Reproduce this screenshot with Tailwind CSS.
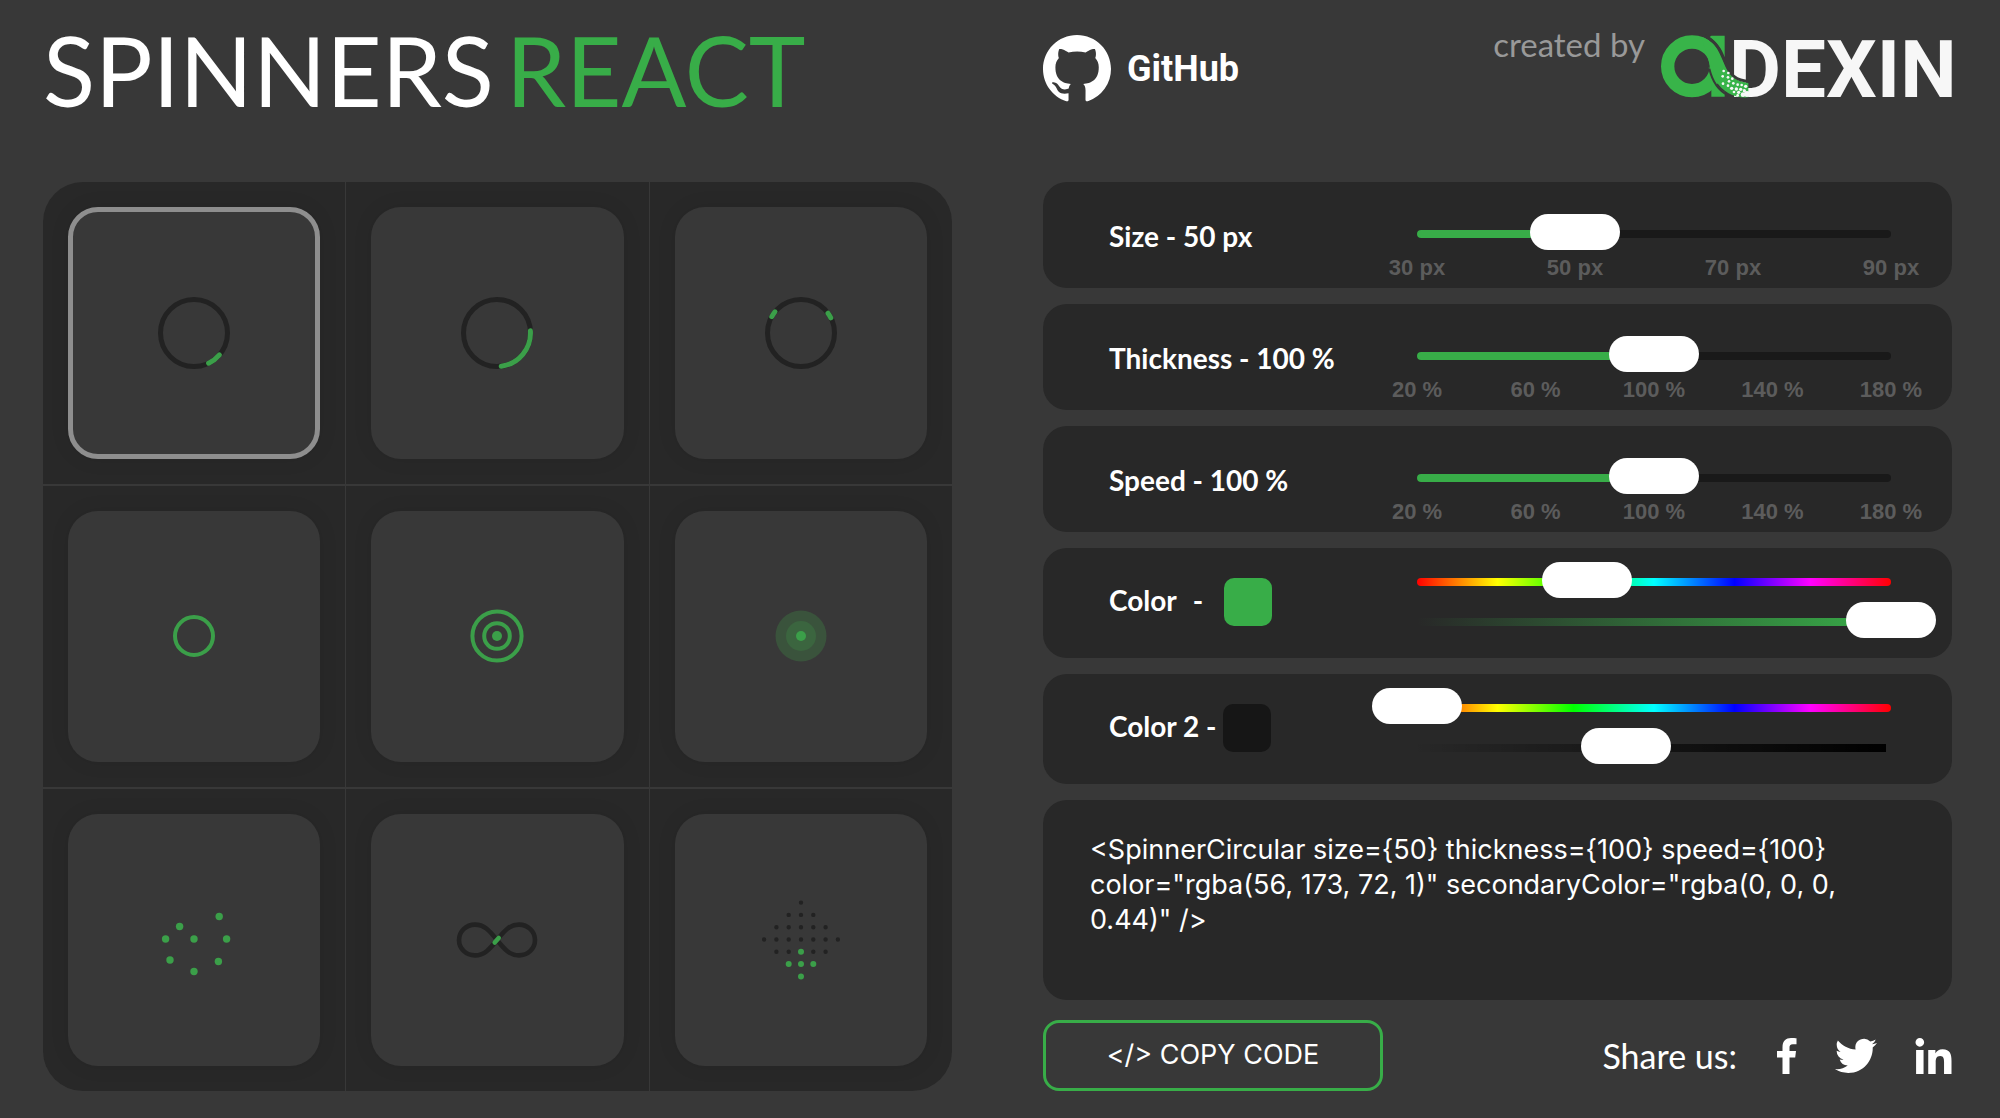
<!DOCTYPE html>
<html lang="en">
<head>
<meta charset="utf-8">
<meta name="viewport" content="width=device-width, initial-scale=1">
<title>Spinners React</title>
<script src="https://cdn.jsdelivr.net/npm/@tailwindcss/browser@4"></script>
</head>
<body class="min-h-screen bg-[#383838] pr-12 pl-[43px] pb-[27px] font-[Lato,sans-serif] text-white">
<header class="grid h-[182px] grid-cols-2 gap-[91px]">
  <h1 class="flex gap-3 pt-2.5 text-[96px] leading-[120px] whitespace-nowrap"><span>SPINNERS</span> <span class="text-[#38ad48]">REACT</span></h1>
  <div class="flex items-start justify-between">
    <a href="#github" class="mt-[35px] flex items-center gap-4">
      <svg class="size-[68px]" viewBox="0 0 16 16" fill="currentColor" aria-hidden="true"><path d="M8 0C3.58 0 0 3.58 0 8c0 3.54 2.29 6.53 5.47 7.59.4.07.55-.17.55-.38 0-.19-.01-.82-.01-1.49-2.01.37-2.53-.49-2.69-.94-.09-.23-.48-.94-.82-1.13-.28-.15-.68-.52-.01-.53.63-.01 1.08.58 1.23.82.72 1.21 1.87.87 2.33.66.07-.52.28-.87.51-1.07-1.78-.2-3.64-.89-3.64-3.95 0-.87.31-1.59.82-2.15-.08-.2-.36-1.02.08-2.12 0 0 .67-.21 2.2.82.64-.18 1.32-.27 2-.27s1.36.09 2 .27c1.53-1.04 2.2-.82 2.2-.82.44 1.1.16 1.92.08 2.12.51.56.82 1.27.82 2.15 0 3.07-1.87 3.75-3.65 3.95.29.25.54.73.54 1.48 0 1.07-.01 1.93-.01 2.2 0 .21.15.46.55.38A8.01 8.01 0 0 0 16 8c0-4.42-3.58-8-8-8z"/></svg>
      <span class="font-[Roboto,sans-serif] text-[36px] leading-10 font-bold">GitHub</span>
    </a>
    <a href="#adexin" class="flex items-start gap-4">
      <span class="mt-6 text-[33px] leading-10 text-[#999]">created by</span>
      <svg class="mt-[35px] h-16 w-[291px] overflow-visible" viewBox="0 0 291 64" role="img" aria-label="Adexin">
        <text x="68" y="62" fill="#f7f7f7" font-family="Roboto" font-weight="700" font-size="80">DEXIN</text>
        <g transform="translate(-20 -15) scale(.33333)">
          <circle cx="153" cy="139" r="73" fill="none" stroke="#38b449" stroke-width="40"/>
          <path d="M211 47H251V112C242 86 228 66 205 52Z" fill="#38b449"/>
          <path d="M203 140C214 180 230 204 251 216V230H211V200Z" fill="#38b449"/>
          <path d="M180 50C225 65 240 105 258 145C272 175 295 186 322 188V232C280 235 244 215 225 182C214 160 208 145 200 110Z" fill="#38b449"/>
          <path d="M193 48C234 68 243 110 259 143C274 174 294 184 345 186" fill="none" stroke="#383838" stroke-width="8"/>
          <path d="M205 146C214 184 232 212 262 226" fill="none" stroke="#383838" stroke-width="6"/>
          <g fill="#f7f7f7">
            <circle cx="248" cy="153" r="4"/><circle cx="262" cy="159" r="4"/><circle cx="245" cy="169" r="4"/><circle cx="261" cy="172" r="4"/><circle cx="274" cy="176" r="4"/><circle cx="264" cy="184" r="4"/><circle cx="246" cy="191" r="4"/><circle cx="277" cy="190" r="4"/><circle cx="261" cy="197" r="4"/><circle cx="290" cy="194" r="4"/><circle cx="272" cy="205" r="5"/><circle cx="286" cy="207" r="5"/><circle cx="302" cy="195" r="4"/><circle cx="299" cy="208" r="5"/><circle cx="314" cy="199" r="5"/><circle cx="310" cy="212" r="5"/><circle cx="293" cy="217" r="5"/><circle cx="279" cy="216" r="4"/><circle cx="306" cy="224" r="7"/><circle cx="318" cy="222" r="9"/><circle cx="290" cy="226" r="4"/>
          </g>
        </g>
      </svg>
    </a>
  </div>
</header>

<main class="grid grid-cols-2 items-stretch gap-[91px]">
  <section aria-label="Spinners" class="grid aspect-square grid-cols-3 grid-rows-3 gap-x-px gap-y-0.5 overflow-hidden rounded-[40px]">
    <div class="grid bg-[#282828] p-[25px]">
      <button aria-label="Circular" aria-pressed="true" class="grid place-items-center rounded-[30px] border-[5px] border-[#8e8e8e] bg-[#383838] shadow-[0_0_20px_#00000014]">
        <svg class="size-20 overflow-visible" viewBox="-40 -40 80 80" fill="none" stroke-width="5" stroke-linecap="round"><circle r="33.5" stroke="#222"/><path d="M25.4 21.8A33.5 33.5 0 0 1 14.6 30.2" stroke="#3b9f49"/></svg>
      </button>
    </div>
    <div class="grid bg-[#282828] p-[25px]">
      <button aria-label="Circular fixed" class="grid place-items-center rounded-[30px] bg-[#383838] shadow-[0_0_20px_#00000014]">
        <svg class="size-20 overflow-visible" viewBox="-40 -40 80 80" fill="none" stroke-width="5" stroke-linecap="round"><circle r="33.5" stroke="#222"/><path d="M33.4 -2.2A33.5 33.5 0 0 1 4.2 33.2" stroke="#3b9f49"/></svg>
      </button>
    </div>
    <div class="grid bg-[#282828] p-[25px]">
      <button aria-label="Circular split" class="grid place-items-center rounded-[30px] bg-[#383838] shadow-[0_0_20px_#00000014]">
        <svg class="size-20 overflow-visible" viewBox="-40 -40 80 80" fill="none" stroke-width="5" stroke-linecap="round"><circle r="33.5" stroke="#222"/><path d="M-29.2 -16.4A33.5 33.5 0 0 1 -26 -21.2M27 -19.8A33.5 33.5 0 0 1 29.8 -15.2" stroke="#3b9f49"/></svg>
      </button>
    </div>
    <div class="grid bg-[#282828] p-[25px]">
      <button aria-label="Round" class="grid place-items-center rounded-[30px] bg-[#383838] shadow-[0_0_20px_#00000014]">
        <svg class="size-20 overflow-visible" viewBox="-40 -40 80 80" fill="none" stroke="#3b9f49" stroke-width="4"><circle r="19"/></svg>
      </button>
    </div>
    <div class="grid bg-[#282828] p-[25px]">
      <button aria-label="Round outlined" class="grid place-items-center rounded-[30px] bg-[#383838] shadow-[0_0_20px_#00000014]">
        <svg class="size-20 overflow-visible" viewBox="-40 -40 80 80" fill="none" stroke="#3b9f49" stroke-width="4"><circle r="24.6"/><circle r="12.8"/><circle r="5" fill="#3b9f49" stroke="none"/></svg>
      </button>
    </div>
    <div class="grid bg-[#282828] p-[25px]">
      <button aria-label="Round filled" class="grid place-items-center rounded-[30px] bg-[#383838] shadow-[0_0_20px_#00000014]">
        <svg class="size-20 overflow-visible" viewBox="-40 -40 80 80"><circle r="25.5" fill="#3a533c"/><circle r="15" fill="#3b653f"/><circle r="5" fill="#3b9f49"/></svg>
      </button>
    </div>
    <div class="grid bg-[#282828] p-[25px]">
      <button aria-label="Dotted" class="grid place-items-center rounded-[30px] bg-[#383838] shadow-[0_0_20px_#00000014]">
        <svg class="size-20 overflow-visible" viewBox="-40 -40 80 80" fill="#3b9f49"><circle cx="25.2" cy="-23.5" r="3.7"/><circle cx="-14.4" cy="-13.5" r="3.7"/><circle cx="-28.4" cy="-1" r="3.7"/><circle cy="-1" r="3.7"/><circle cx="32.6" cy="-1" r="3.7"/><circle cx="-24" cy="20" r="3.7"/><circle cx="24.4" cy="21.5" r="3.7"/><circle cy="31.5" r="3.7"/></svg>
      </button>
    </div>
    <div class="grid bg-[#282828] p-[25px]">
      <button aria-label="Infinity" class="grid place-items-center rounded-[30px] bg-[#383838] shadow-[0_0_20px_#00000014]">
        <svg class="size-20 overflow-visible" viewBox="-40 -40 80 80" fill="none" stroke-width="4.6" stroke-linecap="round"><path d="M0 0C-8 -10 -13 -15.4 -22 -15.4C-31 -15.4 -38 -8.5 -38 0C-38 8.5 -31 15.4 -22 15.4C-13 15.4 -8 10 0 0C8 -10 13 -15.4 22 -15.4C31 -15.4 38 -8.5 38 0C38 8.5 31 15.4 22 15.4C13 15.4 8 10 0 0Z" stroke="#222"/><path d="M-2.3 2.6L1.7 -2" stroke="#3b9f49"/></svg>
      </button>
    </div>
    <div class="grid bg-[#282828] p-[25px]">
      <button aria-label="Diamond" class="grid place-items-center rounded-[30px] bg-[#383838] shadow-[0_0_20px_#00000014]">
        <svg class="size-20 overflow-visible" viewBox="-40 -40 80 80" fill="none" stroke-linecap="round"><path d="M0 -37.4h0M-12.3 -25.1h0m12.3 0h0m12.3 0h0M-24.6 -12.8h0m12.3 0h0m12.3 0h0m12.3 0h0m12.3 0h0M-36.9 -.5h0m12.3 0h0m12.3 0h0m12.3 0h0m12.3 0h0m12.3 0h0m12.3 0h0M-24.6 11.8h0m12.3 0h0m24.6 0h0m12.3 0h0" stroke="#222" stroke-width="4.4"/><path d="M0 11.8h0M-12.3 24.1h0m12.3 0h0m12.3 0h0M0 36.4h0" stroke="#3b9f49" stroke-width="6"/></svg>
      </button>
    </div>
  </section>

  <section aria-label="Settings" class="flex flex-col justify-between">
    <div class="flex h-[106px] rounded-3xl bg-[#282828] pr-4 pl-[66px]">
      <label for="size" class="w-[263px] pt-9 text-[28px] leading-9 font-bold whitespace-nowrap">Size - 50 px</label>
      <div class="flex-1 pt-8">
        <div class="relative flex h-10 items-center px-[45px]">
          <div class="h-2 flex-1 overflow-hidden rounded-full bg-[#191919]"><div class="h-2 w-1/3 bg-[#38ad48]"></div></div>
          <input id="size" type="range" min="30" max="90" value="50" class="absolute inset-0 h-9 w-full appearance-none bg-transparent [&::-webkit-slider-thumb]:h-9 [&::-webkit-slider-thumb]:w-[90px] [&::-webkit-slider-thumb]:appearance-none [&::-webkit-slider-thumb]:rounded-full [&::-webkit-slider-thumb]:bg-white">
        </div>
        <div class="flex justify-between px-[5px] font-['Liberation_Sans',sans-serif] text-[22px] leading-7 font-bold text-[#5c5c5c] *:w-20 *:text-center"><span>30 px</span><span>50 px</span><span>70 px</span><span>90 px</span></div>
      </div>
    </div>
    <div class="flex h-[106px] rounded-3xl bg-[#282828] pr-4 pl-[66px]">
      <label for="thickness" class="w-[263px] pt-9 text-[28px] leading-9 font-bold whitespace-nowrap">Thickness - 100 %</label>
      <div class="flex-1 pt-8">
        <div class="relative flex h-10 items-center px-[45px]">
          <div class="h-2 flex-1 overflow-hidden rounded-full bg-[#191919]"><div class="h-2 w-1/2 bg-[#38ad48]"></div></div>
          <input id="thickness" type="range" min="20" max="180" value="100" class="absolute inset-0 h-9 w-full appearance-none bg-transparent [&::-webkit-slider-thumb]:h-9 [&::-webkit-slider-thumb]:w-[90px] [&::-webkit-slider-thumb]:appearance-none [&::-webkit-slider-thumb]:rounded-full [&::-webkit-slider-thumb]:bg-white">
        </div>
        <div class="flex justify-between px-[5px] font-['Liberation_Sans',sans-serif] text-[22px] leading-7 font-bold text-[#5c5c5c] *:w-20 *:text-center"><span>20 %</span><span>60 %</span><span>100 %</span><span>140 %</span><span>180 %</span></div>
      </div>
    </div>
    <div class="flex h-[106px] rounded-3xl bg-[#282828] pr-4 pl-[66px]">
      <label for="speed" class="w-[263px] pt-9 text-[28px] leading-9 font-bold whitespace-nowrap">Speed - 100 %</label>
      <div class="flex-1 pt-8">
        <div class="relative flex h-10 items-center px-[45px]">
          <div class="h-2 flex-1 overflow-hidden rounded-full bg-[#191919]"><div class="h-2 w-1/2 bg-[#38ad48]"></div></div>
          <input id="speed" type="range" min="20" max="180" value="100" class="absolute inset-0 h-9 w-full appearance-none bg-transparent [&::-webkit-slider-thumb]:h-9 [&::-webkit-slider-thumb]:w-[90px] [&::-webkit-slider-thumb]:appearance-none [&::-webkit-slider-thumb]:rounded-full [&::-webkit-slider-thumb]:bg-white">
        </div>
        <div class="flex justify-between px-[5px] font-['Liberation_Sans',sans-serif] text-[22px] leading-7 font-bold text-[#5c5c5c] *:w-20 *:text-center"><span>20 %</span><span>60 %</span><span>100 %</span><span>140 %</span><span>180 %</span></div>
      </div>
    </div>
    <div class="flex h-[110px] rounded-3xl bg-[#282828] pr-4 pl-[66px]">
      <div class="flex w-[263px] pt-[30px]">
        <label for="hue" class="flex w-[115px] gap-4 text-[28px] leading-[44px] font-bold"><span>Color</span><span>-</span></label>
        <div class="size-12 rounded-[10px] bg-[#38ad48]"></div>
      </div>
      <div class="flex-1 pt-3.5">
        <div class="relative flex h-10 items-center px-[45px]">
          <div class="h-2 flex-1 rounded-full bg-[linear-gradient(to_right,#f00_0%,#ff0_17%,#0f0_33%,#0ff_50%,#00f_67%,#f0f_83%,#f00_100%)]"></div>
          <input id="hue" type="range" min="0" max="360" value="129" class="absolute inset-0 h-9 w-full appearance-none bg-transparent [&::-webkit-slider-thumb]:h-9 [&::-webkit-slider-thumb]:w-[90px] [&::-webkit-slider-thumb]:appearance-none [&::-webkit-slider-thumb]:rounded-full [&::-webkit-slider-thumb]:bg-white">
        </div>
        <div class="relative flex h-10 items-center px-[45px]">
          <div class="h-2 flex-1 rounded-full bg-[linear-gradient(to_right,#38ad4800,#38ad48)]"></div>
          <input aria-label="Color opacity" type="range" min="0" max="100" value="100" class="absolute inset-0 h-9 w-full appearance-none bg-transparent [&::-webkit-slider-thumb]:h-9 [&::-webkit-slider-thumb]:w-[90px] [&::-webkit-slider-thumb]:appearance-none [&::-webkit-slider-thumb]:rounded-full [&::-webkit-slider-thumb]:bg-white">
        </div>
      </div>
    </div>
    <div class="flex h-[110px] rounded-3xl bg-[#282828] pr-4 pl-[66px]">
      <div class="flex w-[263px] pt-[30px]">
        <label for="hue2" class="w-[114px] text-[28px] leading-[44px] font-bold whitespace-nowrap">Color 2 -</label>
        <div class="size-12 rounded-[10px] bg-[#161616]"></div>
      </div>
      <div class="flex-1 pt-3.5">
        <div class="relative flex h-10 items-center px-[45px]">
          <div class="h-2 flex-1 rounded-full bg-[linear-gradient(to_right,#f00_0%,#ff0_17%,#0f0_33%,#0ff_50%,#00f_67%,#f0f_83%,#f00_100%)]"></div>
          <input id="hue2" type="range" min="0" max="360" value="0" class="absolute inset-0 h-9 w-full appearance-none bg-transparent [&::-webkit-slider-thumb]:h-9 [&::-webkit-slider-thumb]:w-[90px] [&::-webkit-slider-thumb]:appearance-none [&::-webkit-slider-thumb]:rounded-full [&::-webkit-slider-thumb]:bg-white">
        </div>
        <div class="relative flex h-10 items-center pr-[50px] pl-10">
          <div class="h-2 flex-1 bg-[linear-gradient(to_right,#0000,#000)]"></div>
          <input aria-label="Color 2 opacity" type="range" min="0" max="100" value="44" class="absolute inset-0 h-9 w-full appearance-none bg-transparent [&::-webkit-slider-thumb]:h-9 [&::-webkit-slider-thumb]:w-[90px] [&::-webkit-slider-thumb]:appearance-none [&::-webkit-slider-thumb]:rounded-full [&::-webkit-slider-thumb]:bg-white">
        </div>
      </div>
    </div>
    <div class="h-[200px] rounded-3xl bg-[#282828] px-[47px] pt-8 font-[Inter,sans-serif] text-[27px] leading-[35px]"><code class="font-[Inter,sans-serif]">&lt;SpinnerCircular size={50} thickness={100} speed={100} color="rgba(56, 173, 72, 1)" secondaryColor="rgba(0, 0, 0, 0.44)" /&gt;</code></div>
    <div class="mt-1 flex h-[71px] items-center justify-between">
      <button class="h-[71px] w-[340px] rounded-2xl border-[3px] border-[#38ad48] font-[Inter,sans-serif] text-[27px]">&lt;/&gt; COPY CODE</button>
      <div class="flex items-center">
        <span class="text-[34px] leading-10">Share us:</span>
        <a href="#facebook" aria-label="Facebook" class="ml-10"><svg class="h-9 w-5" viewBox="0 0 20 36" fill="currentColor"><path d="M5.5 36V19.500H0V13h5.500V9C5.500 3 9 0 14 0c2 0 4.500.1 5.500.3V6.200h-3.600c-2.800 0-3.400 1.300-3.400 3.200V13H19l-.8 6.500H12.500V36Z"/></svg></a>
        <a href="#twitter" aria-label="Twitter" class="ml-[38px]"><svg class="h-9 w-[42px]" viewBox="0 2.200 24 19.700" fill="currentColor"><path d="M23.953 4.570a10 10 0 01-2.825.775 4.958 4.958 0 002.163-2.723c-.951.555-2.005.959-3.127 1.184a4.920 4.920 0 00-8.384 4.482C7.690 8.095 4.067 6.130 1.640 3.162a4.822 4.822 0 00-.666 2.475c0 1.710.870 3.213 2.188 4.096a4.904 4.904 0 01-2.228-.616v.060a4.923 4.923 0 003.946 4.827 4.996 4.996 0 01-2.212.085 4.936 4.936 0 004.604 3.417 9.867 9.867 0 01-6.102 2.105c-.390 0-.779-.023-1.170-.067a13.995 13.995 0 007.557 2.209c9.053 0 13.998-7.496 13.998-13.985 0-.210 0-.420-.015-.630A9.935 9.935 0 0024 4.590z"/></svg></a>
        <a href="#linkedin" aria-label="LinkedIn" class="ml-[38px]"><svg class="h-9 w-[37px]" viewBox="0 0 448 448" fill="currentColor"><path d="M100.280 448H7.400V148.900h92.880zM53.790 108.100C24.090 108.100 0 83.500 0 53.800a53.790 53.790 0 0 1 107.580 0c0 29.700-24.100 54.300-53.790 54.300zM447.900 448h-92.680V302.400c0-34.700-.7-79.200-48.290-79.200-48.290 0-55.690 37.700-55.690 76.700V448h-92.780V148.900h89.080v40.800h1.300c12.400-23.500 42.690-48.300 87.880-48.300 94 0 111.280 61.900 111.280 142.300V448z"/></svg></a>
      </div>
    </div>
  </section>
</main>
</body>
</html>
